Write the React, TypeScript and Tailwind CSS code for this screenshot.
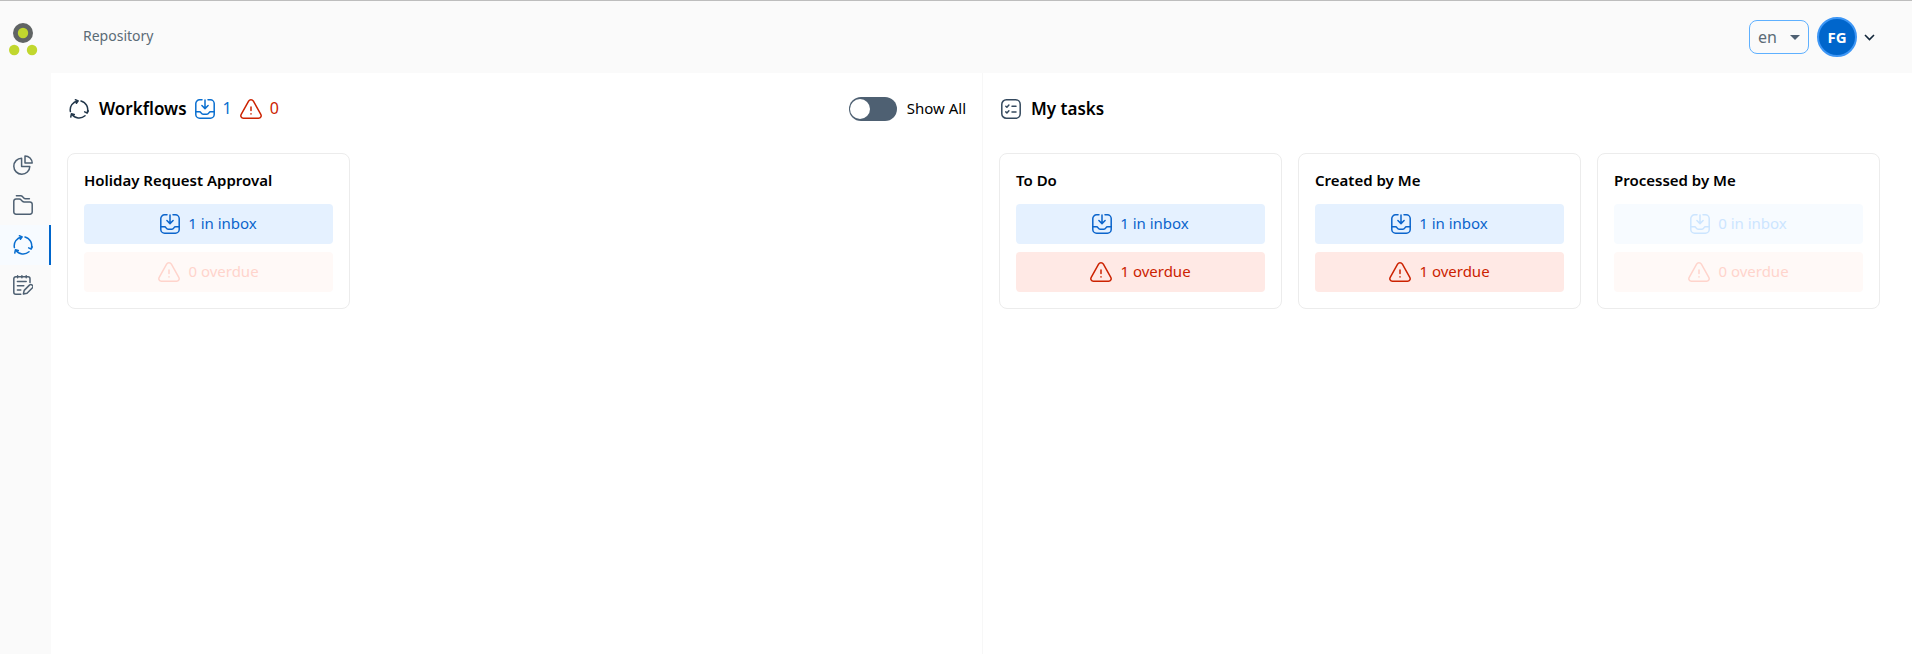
import React, { useState } from "react";

type IconProps = { className?: string };

function Svg({ className = "", box = "0 0 20 20", children }: IconProps & { box?: string; children: React.ReactNode }) {
  return (
    <svg
      viewBox={box}
      className={`shrink-0 ${className}`}
      fill="none"
      stroke="currentColor"
      strokeWidth="1.5"
      strokeLinecap="round"
      strokeLinejoin="round"
      aria-hidden="true"
    >
      {children}
    </svg>
  );
}

const InboxIcon = ({ className = "size-5" }: IconProps) => (
  <Svg className={className}>
    <path d="M7 .8H4.6A3.8 3.8 0 0 0 .8 4.6v10.8a3.8 3.8 0 0 0 3.8 3.8h10.8a3.8 3.8 0 0 0 3.8-3.8V4.6A3.8 3.8 0 0 0 15.400.8H13" />
    <path d="M10 1v8.400M6.900 6.500 10 9.600l3.100-3.100" />
    <path d="M.8 12.800h3.600c.9 0 1.300.4 1.700 1 .5.8 1 1.400 2 1.400h3.800c1 0 1.500-.6 2-1.400.4-.6.8-1 1.700-1h3.600" />
  </Svg>
);

const WarningIcon = ({ className = "h-5 w-[22px]" }: IconProps) => (
  <Svg className={className} box="0 0 22 20">
    <path d="M8.6 2.2 1.2 15.4c-1 1.8.1 3.8 2.2 3.8h15.2c2.1 0 3.2-2 2.2-3.8L13.4 2.2c-1.1-1.900-3.700-1.900-4.800 0Z" />
    <path d="M11 8v3.600M11 14.800v.1" />
  </Svg>
);

const CycleIcon = ({ className = "size-5" }: IconProps) => (
  <Svg className={className}>
    <path d="M1.400 12.600A9 9 0 0 1 8.800 1.900M6.400.8l2.800 1.100-1.800 2.400" />
    <path d="M12 1.900A9 9 0 0 1 18.200 13.600M19.400 11.800l-1.300 2.300-2.400-1.200" />
    <path d="M16 16.800A9 9 0 0 1 2.800 15.200M1.800 18l.6-3.200 2.900.7" />
  </Svg>
);

const PieIcon = ({ className = "size-5" }: IconProps) => (
  <Svg className={className}>
    <path d="M8.600 3.200a8 8 0 1 0 8.200 8.200H8.600Z" />
    <path d="M12 .9v7.200h7.200A7.300 7.300 0 0 0 12 .9Z" />
  </Svg>
);

const FolderIcon = ({ className = "size-5" }: IconProps) => (
  <Svg className={className}>
    <path d="M.8 6.200A2.200 2.200 0 0 1 3 4h3.400c.7 0 1.200.2 1.600.7l1.600 1.700c.4.4.9.6 1.500.6H17a2.200 2.200 0 0 1 2.200 2.200V17a2.200 2.200 0 0 1-2.200 2.200H3A2.200 2.200 0 0 1 .8 17Z" />
    <path d="M3.400.8h4.400c.6 0 1.100.2 1.500.6l1.600 1.700c.4.4.9.6 1.500.6h4" />
  </Svg>
);

const FormIcon = ({ className = "size-5" }: IconProps) => (
  <Svg className={className}>
    <path d="M17 7.500V3.800a2 2 0 0 0-2-2H2.800a2 2 0 0 0-2 2v13.400a2 2 0 0 0 2 2h5" />
    <path d="M4.600.8v2M8.900.8v2M13.200.8v2M4.400 6.600h8.800M4.400 10.800h6.400M4.400 15h3.400" />
    <path d="m16.700 9.900-5.500 5.500-.8 3.600 3.600-.8 5.500-5.500a1.500 1.500 0 0 0 0-2.200l-.6-.6a1.500 1.500 0 0 0-2.200 0Z" />
  </Svg>
);

const TasksIcon = ({ className = "size-5" }: IconProps) => (
  <Svg className={className}>
    <rect x=".8" y=".8" width="18.4" height="18.4" rx="4.5" />
    <path d="m4.800 7.200 1.100 1.100 2-2.200M4.800 12.900 5.900 14l2-2.200M11 7.300h4M11 13h4" />
  </Svg>
);

const Logo = () => (
  <svg viewBox="0 0 30 34" className="h-[34px] w-[30px]" aria-hidden="true">
    <circle cx="15" cy="11" r="10" fill="#606464" />
    <circle cx="15" cy="11" r="5.200" fill="#c1d72e" />
    <circle cx="6.200" cy="28" r="5.200" fill="#c1d72e" />
    <circle cx="24" cy="28" r="5.200" fill="#c1d72e" />
  </svg>
);

const navItems = [
  { label: "Dashboard", Icon: PieIcon },
  { label: "Documents", Icon: FolderIcon },
  { label: "Workflows", Icon: CycleIcon, active: true },
  { label: "Forms", Icon: FormIcon },
];

function Sidebar() {
  return (
    <aside className="flex w-[51px] shrink-0 flex-col bg-[#fafafa]">
      <a href="#home" aria-label="Home" className="mt-[21px] ml-2">
        <Logo />
      </a>
      <nav aria-label="Main" className="mt-[89px] flex flex-col">
        {navItems.map(({ label, Icon, active }) => (
          <a
            key={label}
            href={`#${label.toLowerCase()}`}
            aria-label={label}
            aria-current={active ? "page" : undefined}
            className={
              active
                ? "flex h-10 items-center border-r-2 border-[#0066cc] bg-[#f7fbff] pl-[13px] text-[#0a6fd0]"
                : "flex h-10 items-center pl-[13px] text-[#4e6072]"
            }
          >
            <Icon />
          </a>
        ))}
      </nav>
    </aside>
  );
}

function TopBar() {
  const [language, setLanguage] = useState("en");
  return (
    <header className="flex h-[72px] items-center justify-between bg-[#fafafa] pr-[37px] pl-8">
      <a href="#repository" className="pb-0.5 text-sm text-[#5b6b76]">
        Repository
      </a>
      <div className="flex items-center gap-2">
        <div className="relative">
          <select
            aria-label="Language"
            value={language}
            onChange={(e) => setLanguage(e.target.value)}
            className="block h-[34px] w-[60px] appearance-none rounded-lg border border-[#5eb0ff] bg-[#fafafa] pl-2 text-base leading-6 text-[#5b6b76]"
          >
            <option value="en">en</option>
            <option value="de">de</option>
          </select>
          <svg viewBox="0 0 10 5" className="pointer-events-none absolute top-[15px] right-[9px] h-[5px] w-2.5" aria-hidden="true">
            <path d="M0 0h10L5 5Z" fill="#4e6072" />
          </svg>
        </div>
        <button type="button" aria-label="User menu" className="flex items-center gap-[7px]">
          <span className="flex size-10 items-center justify-center rounded-full border-2 border-[#3d96f5] bg-[#0066cc] text-[15px] font-bold text-white">
            FG
          </span>
          <svg viewBox="0 0 11 7" className="h-[7px] w-[11px]" fill="none" stroke="#12263a" strokeWidth="1.6" aria-hidden="true">
            <path d="m1 1 4.500 4.500L10 1" />
          </svg>
        </button>
      </div>
    </header>
  );
}

function InboxRow({ count }: { count: number }) {
  return (
    <a
      href="#inbox"
      className={
        count > 0
          ? "flex h-10 items-center justify-center gap-2 rounded bg-[#e5f1ff] text-[#0a64cc]"
          : "flex h-10 items-center justify-center gap-2 rounded bg-[#f7fbff] text-[#cce5ff]"
      }
    >
      <InboxIcon />
      <span className="pb-0.5">{count} in inbox</span>
    </a>
  );
}

function OverdueRow({ count }: { count: number }) {
  return (
    <a
      href="#overdue"
      className={
        count > 0
          ? "flex h-10 items-center justify-center gap-2 rounded bg-[#ffe9e5] text-[#cc2200]"
          : "flex h-10 items-center justify-center gap-2 rounded bg-[#fff9f7] text-[#ffd4cc]"
      }
    >
      <WarningIcon />
      <span className="pb-0.5">{count} overdue</span>
    </a>
  );
}

function Card({ title, inbox, overdue }: { title: string; inbox: number; overdue: number }) {
  return (
    <article className="flex w-[283px] flex-col gap-2 rounded-lg border border-[#ececec] p-4 text-[15px]">
      <h3 className="pb-1.5 leading-5 font-semibold text-black">{title}</h3>
      <InboxRow count={inbox} />
      <OverdueRow count={overdue} />
    </article>
  );
}

const tasks = [
  { title: "To Do", inbox: 1, overdue: 1 },
  { title: "Created by Me", inbox: 1, overdue: 1 },
  { title: "Processed by Me", inbox: 0, overdue: 0 },
];

export default function App() {
  const [showAll, setShowAll] = useState(false);
  return (
    <div className="flex min-h-screen border-t border-[#bdbdbd] bg-white font-['Noto_Sans',sans-serif] text-black">
      <Sidebar />
      <div className="flex min-w-0 flex-1 flex-col">
        <TopBar />
        <main className="flex flex-1">
          <section className="flex-1 border-r border-[#f7f7f7] p-4">
            <div className="flex h-10 items-center justify-between">
              <div className="flex items-center gap-2">
                <CycleIcon className="ml-0.5 size-5 text-[#22374b]" />
                <h2 className="pl-0.5 text-[17px] font-semibold">Workflows</h2>
                <span className="flex items-center gap-2 text-base text-[#0a6fd0]">
                  <InboxIcon />
                  <span className="pb-0.5">1</span>
                </span>
                <span className="flex items-center gap-2 text-base text-[#cc2200]">
                  <WarningIcon />
                  <span className="pb-0.5">0</span>
                </span>
              </div>
              <label className="flex items-center gap-2.5 text-[15px]">
                <input
                  type="checkbox"
                  role="switch"
                  checked={showAll}
                  onChange={(e) => setShowAll(e.target.checked)}
                  className="h-6 w-12 appearance-none rounded-full bg-[#4e6072] px-px py-0.5 before:block before:size-5 before:rounded-full before:bg-white checked:bg-[#0066cc] checked:before:ml-6"
                />
                <span className="pb-0.5">Show All</span>
              </label>
            </div>
            <div className="mt-6 flex flex-wrap gap-4">
              <Card title="Holiday Request Approval" inbox={1} overdue={0} />
            </div>
          </section>
          <section className="flex-1 py-4 pr-3.5 pl-4">
            <div className="flex h-10 items-center gap-2.5">
              <TasksIcon className="ml-0.5 size-5 text-[#34495e]" />
              <h2 className="text-[17px] font-semibold">My tasks</h2>
            </div>
            <div className="mt-6 flex flex-wrap gap-4">
              {tasks.map((task) => (
                <Card key={task.title} {...task} />
              ))}
            </div>
          </section>
        </main>
      </div>
    </div>
  );
}
